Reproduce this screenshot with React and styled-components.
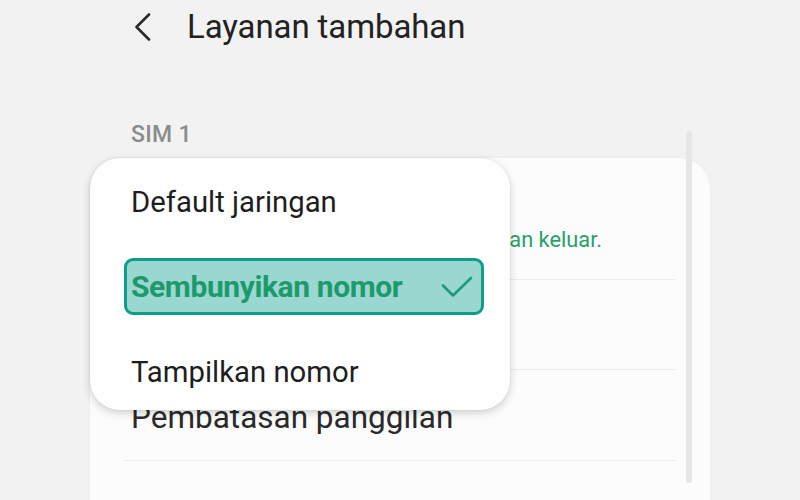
import React from "react";
import styled, { createGlobalStyle } from "styled-components";

const options = [
  { label: "Default jaringan" },
  { label: "Sembunyikan nomor", selected: true },
  { label: "Tampilkan nomor" },
];

const App = () => {
  return (
    <Page>
      <GlobalStyle />
      <Header>
        <BackButton aria-label="Kembali">
          <svg width="20" height="28" viewBox="0 0 20 28" fill="none">
            <path
              d="M16 1.5 L3.5 14 L16 26.5"
              stroke="#2b2b2b"
              strokeWidth="2.6"
              strokeLinecap="round"
              strokeLinejoin="round"
            />
          </svg>
        </BackButton>
        <Title>Layanan tambahan</Title>
      </Header>

      <SectionLabel>SIM 1</SectionLabel>

      <Card>
        <Row $height={122}>
          <RowTitle>ID Penelepon</RowTitle>
          <RowSummary>Nomor Anda tersembunyi pada panggilan keluar.</RowSummary>
        </Row>
        <Row $height={90}>
          <RowTitle>Panggilan tunggu</RowTitle>
        </Row>
        <Row $height={91}>
          <RowTitle>Pembatasan panggilan</RowTitle>
        </Row>
      </Card>

      <Scrollbar />

      <Menu>
        {options.map((opt) => (
          <MenuItem key={opt.label} $selected={opt.selected}>
            <span>{opt.label}</span>
            {opt.selected && (
              <svg width="32" height="22" viewBox="0 0 32 22" fill="none">
                <path
                  d="M2 9.5 L12 19.5 L30 2"
                  stroke="#1b9a80"
                  strokeWidth="2.6"
                  strokeLinecap="round"
                  strokeLinejoin="round"
                />
              </svg>
            )}
          </MenuItem>
        ))}
      </Menu>
    </Page>
  );
};

export default App;

const GlobalStyle = createGlobalStyle`
  html, body {
    margin: 0;
    padding: 0;
    background: #f2f2f2;
  }
  body {
    font-family: Roboto, "Noto Sans", "Liberation Sans", sans-serif;
    -webkit-font-smoothing: antialiased;
  }
`;

const Page = styled.div`
  position: relative;
  width: 800px;
  height: 500px;
  overflow: hidden;
  background: #f2f2f2;
  display: flex;
  flex-direction: column;
`;

const Header = styled.div`
  height: 54px;
  flex-shrink: 0;
  display: flex;
  align-items: center;
  padding-left: 133px;
  gap: 34px;
`;

const BackButton = styled.div`
  width: 20px;
  height: 28px;
  display: flex;
`;

const Title = styled.div`
  font-size: 33px;
  line-height: 40px;
  color: #222;
  letter-spacing: -0.1px;
`;

const SectionLabel = styled.div`
  flex-shrink: 0;
  margin: 68px 0 10px 131px;
  font-size: 23px;
  line-height: 26px;
  font-weight: 500;
  letter-spacing: 0.3px;
  color: #8c8c8c;
`;

const Card = styled.div`
  flex-shrink: 0;
  margin-left: 90px;
  width: 620px;
  box-sizing: border-box;
  padding: 0 34px 80px;
  background: #fcfcfc;
  border-radius: 30px;
  box-shadow: 0 0 2px rgba(0, 0, 0, 0.08);
`;

const Row = styled.div`
  height: ${(p) => p.$height}px;
  box-sizing: border-box;
  padding: 6px 7px 0;
  display: flex;
  flex-direction: column;
  justify-content: center;
  border-bottom: 1px solid #ebebeb;
`;

const RowTitle = styled.div`
  font-size: 31.5px;
  line-height: 36px;
  color: #2a2a2a;
  white-space: nowrap;
`;

const RowSummary = styled.div`
  margin-top: 1px;
  font-size: 21.8px;
  line-height: 28px;
  color: #28a06b;
  white-space: nowrap;
`;

const Scrollbar = styled.div`
  position: absolute;
  left: 686px;
  top: 131px;
  width: 6px;
  height: 352px;
  border-radius: 3px;
  background: #e6e6e6;
`;

const Menu = styled.div`
  position: absolute;
  left: 90px;
  top: 158px;
  width: 420px;
  height: 252px;
  box-sizing: border-box;
  padding: 15px 26px 9px 34px;
  background: #fefefe;
  border-radius: 30px;
  box-shadow: 0 3px 8px rgba(0, 0, 0, 0.18), 0 0 2px rgba(0, 0, 0, 0.08);
  display: flex;
  flex-direction: column;
  gap: 28px;
`;

const MenuItem = styled.div`
  height: 57px;
  box-sizing: border-box;
  display: flex;
  align-items: center;
  justify-content: space-between;
  padding: 0 8px 0 4px;
  border: 3.5px solid ${(p) => (p.$selected ? "#0e9d8c" : "transparent")};
  border-radius: 9px;
  background: ${(p) => (p.$selected ? "#9ad7d0" : "transparent")};
  font-size: ${(p) => (p.$selected ? "30px" : "29.3px")};
  font-weight: ${(p) => (p.$selected ? 700 : 400)};
  letter-spacing: ${(p) => (p.$selected ? "-0.4px" : "0")};
  color: ${(p) => (p.$selected ? "#1d9a6c" : "#1e1e1e")};
  white-space: nowrap;
`;
